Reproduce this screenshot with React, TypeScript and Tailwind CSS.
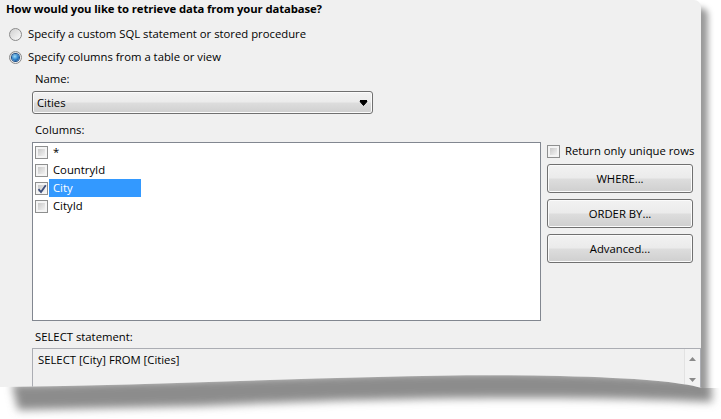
const font = "font-['Open_Sans',sans-serif]";

function Radio({ checked }: { checked?: boolean }) {
  return (
    <span className="w-[13px] h-[13px] rounded-full border border-[#8a8a8a] bg-[linear-gradient(135deg,#d0d0d0,#fbfbfb)] flex items-center justify-center shrink-0">
      {checked && (
        <span className="w-[7px] h-[7px] rounded-full bg-[radial-gradient(circle_at_40%_35%,#9bdcf8_0%,#2a7dc8_55%,#0d3f78_100%)] shadow-[0_0_0_1px_#1b4f8a]" />
      )}
    </span>
  );
}

function Check({ checked }: { checked?: boolean }) {
  return (
    <span className="w-[13px] h-[13px] border border-[#8e8f8f] bg-[#f4f4f4] p-[2px] shrink-0 relative">
      <span className="block w-full h-full bg-[linear-gradient(135deg,#c9c9c9,#f2f2f2)]" />
      {checked && (
        <svg className="absolute left-[1px] top-[1px]" width="10" height="10" viewBox="0 0 10 10">
          <path d="M1.5 5.2 L4 8 L8.8 1.2" fill="none" stroke="#3e4f7c" strokeWidth="1.8" />
        </svg>
      )}
    </span>
  );
}

function Button({ label }: { label: string }) {
  return (
    <div className="h-[29px] w-[146px] rounded-[3px] border border-[#707070] bg-[linear-gradient(#f2f2f2_0%,#ebebeb_48%,#dddddd_52%,#cfcfcf_100%)] shadow-[inset_0_0_0_1px_#fbfbfb] flex items-center justify-center text-black">
      {label}
    </div>
  );
}

const columns = ["*", "CountryId", "City", "CityId"];

export default function App() {
  return (
    <div className={`relative w-[721px] h-[419px] bg-white overflow-hidden text-[11.3px] leading-[16px] text-black whitespace-nowrap ${font}`}>
      <div className="w-[701px] h-[419px] bg-[#f0f0f0] rounded-tr-[7px] shadow-[7px_8px_6px_rgba(0,0,0,0.4)] flex flex-col">
        <div className="mt-[1px] pl-[6px] font-bold h-[16px] tracking-[-0.1px]">How would you like to retrieve data from your database?</div>

        <label className="mt-[9px] pl-[9px] h-[16px] flex items-center gap-[6px]">
          <Radio />
          <span>Specify a custom SQL statement or stored procedure</span>
        </label>
        <label className="mt-[7px] pl-[9px] h-[16px] flex items-center gap-[6px]">
          <Radio checked />
          <span>Specify columns from a table or view</span>
        </label>

        <div className="mt-[6px] pl-[35px] h-[16px]">Name:</div>

        <div className="mt-[4px] ml-[32px] w-[341px] h-[23px] rounded-[3px] border border-[#707070] bg-[linear-gradient(#f2f2f2_0%,#ebebeb_48%,#dddddd_52%,#cfcfcf_100%)] shadow-[inset_0_0_0_1px_#fbfbfb] flex items-center justify-between pl-[4px] pr-[4px]">
          <span>Cities</span>
          <svg width="9" height="6" viewBox="0 0 9 6">
            <path d="M1 0.5 H8 M1 1.5 H8 L4.5 5.5 Z" fill="#000" stroke="#000" strokeWidth="1" />
          </svg>
        </div>

        <div className="mt-[8px] pl-[35px] h-[16px]">Columns:</div>

        <div className="mt-[4px] ml-[32px] flex gap-[6px]">
          <div className="w-[509px] h-[179px] border border-[#828790] bg-white pl-[2px] flex flex-col">
            {columns.map((c) => (
              <div key={c} className="h-[18px] flex items-center gap-[1px]">
                <Check checked={c === "City"} />
                <span
                  className={`h-[18px] w-[92px] pl-[4px] flex items-center ${
                    c === "City" ? "bg-[#3399ff] text-white" : ""
                  }`}
                >
                  {c}
                </span>
              </div>
            ))}
          </div>

          <div className="flex flex-col">
            <label className="mt-[1px] h-[16px] flex items-center gap-[5px]">
              <Check />
              <span>Return only unique rows</span>
            </label>
            <div className="mt-[5px] flex flex-col gap-[6px]">
              <Button label="WHERE..." />
              <Button label="ORDER BY..." />
              <Button label="Advanced..." />
            </div>
          </div>
        </div>

        <div className="mt-[8px] pl-[35px] h-[16px]">SELECT statement:</div>

        <div className="mt-[3px] ml-[32px] flex-1 border-t border-l border-r border-[#abadb3] flex">
          <div className="flex-1 pl-[5px] pt-[3px]">SELECT [City] FROM [Cities]</div>
          <div className="w-[16px] border-l border-[#e2e2e2] bg-[#f3f3f3] flex flex-col items-center pt-[8px] gap-[17px]">
            <svg width="7" height="4" viewBox="0 0 7 4"><path d="M0 4 L3.5 0 L7 4 Z" fill="#8a8a8a" /></svg>
            <svg width="7" height="4" viewBox="0 0 7 4"><path d="M0 0 L3.5 4 L7 0 Z" fill="#8a8a8a" /></svg>
          </div>
        </div>
      </div>

      {/* curled bottom edge with its shadow */}
      <svg className="absolute left-0 top-[360px]" width="721" height="59" viewBox="0 0 721 59">
        <defs>
          <clipPath id="below">
            <path d="M0 27 C200 25 400 12 560 16 C640 18 680 22 702 28 L721 28 L721 59 L0 59 Z" />
          </clipPath>
          <filter id="blur" x="-10%" y="-100%" width="120%" height="300%">
            <feGaussianBlur stdDeviation="4" />
          </filter>
        </defs>
        <path d="M0 27 C200 25 400 12 560 16 C640 18 680 22 702 28 L721 28 L721 59 L0 59 Z" fill="#fff" />
        <g clipPath="url(#below)">
          <path
            d="M12 24 C200 22 400 9 560 13 C640 15 680 19 711 20 L712 42 C600 36 400 36 200 46 L18 50 Z"
            fill="#8c8c8c"
            filter="url(#blur)"
          />
        </g>
      </svg>
    </div>
  );
}
